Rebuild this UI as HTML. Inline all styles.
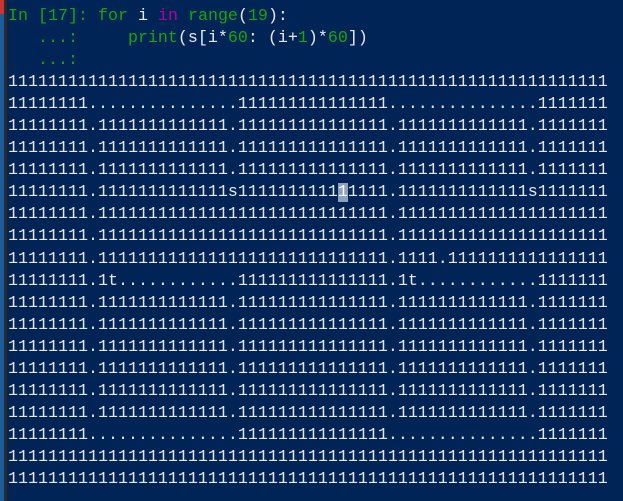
<!DOCTYPE html><html><head><style>
html,body{margin:0;padding:0;width:623px;height:501px;overflow:hidden;background:#012456}
.l1{position:absolute;left:0;top:0;width:4px;height:501px;background:#1b5c9c}
.l2{position:absolute;left:4px;top:0;width:3px;height:501px;background:#2a2a2a}
.r{position:absolute;left:0;top:0;width:4px;height:14px;background:#c33}
pre{position:absolute;left:8px;top:6px;margin:0;font-family:"Liberation Mono",monospace;font-size:16.67px;line-height:22.05px;color:#e8e8ec;letter-spacing:0}
.g{color:#16a60f}.m{color:#b4009e}
.h{background:#8ea0ba;color:#fff}
</style></head><body>
<div class="l1"></div><div class="l2"></div><div class="r"></div>
<pre><span class="g">In [17]: for</span> i <span class="m">in</span> <span class="g">range</span>(<span class="g">19</span>):
<span class="g">   ...:     print</span>(s[i*<span class="g">60</span>: (i+<span class="g">1</span>)*<span class="g">60</span>])
<span class="g">   ...:</span>
111111111111111111111111111111111111111111111111111111111111
11111111...............111111111111111...............1111111
11111111.1111111111111.111111111111111.1111111111111.1111111
11111111.1111111111111.111111111111111.1111111111111.1111111
11111111.1111111111111.111111111111111.1111111111111.1111111
11111111.1111111111111s1111111111<span class="h">1</span>1111.1111111111111s1111111
11111111.11111111111111111111111111111.111111111111111111111
11111111.11111111111111111111111111111.111111111111111111111
11111111.11111111111111111111111111111.1111.1111111111111111
11111111.1t............111111111111111.1t............1111111
11111111.1111111111111.111111111111111.1111111111111.1111111
11111111.1111111111111.111111111111111.1111111111111.1111111
11111111.1111111111111.111111111111111.1111111111111.1111111
11111111.1111111111111.111111111111111.1111111111111.1111111
11111111.1111111111111.111111111111111.1111111111111.1111111
11111111.1111111111111.111111111111111.1111111111111.1111111
11111111...............111111111111111...............1111111
111111111111111111111111111111111111111111111111111111111111
111111111111111111111111111111111111111111111111111111111111</pre>
</body></html>
